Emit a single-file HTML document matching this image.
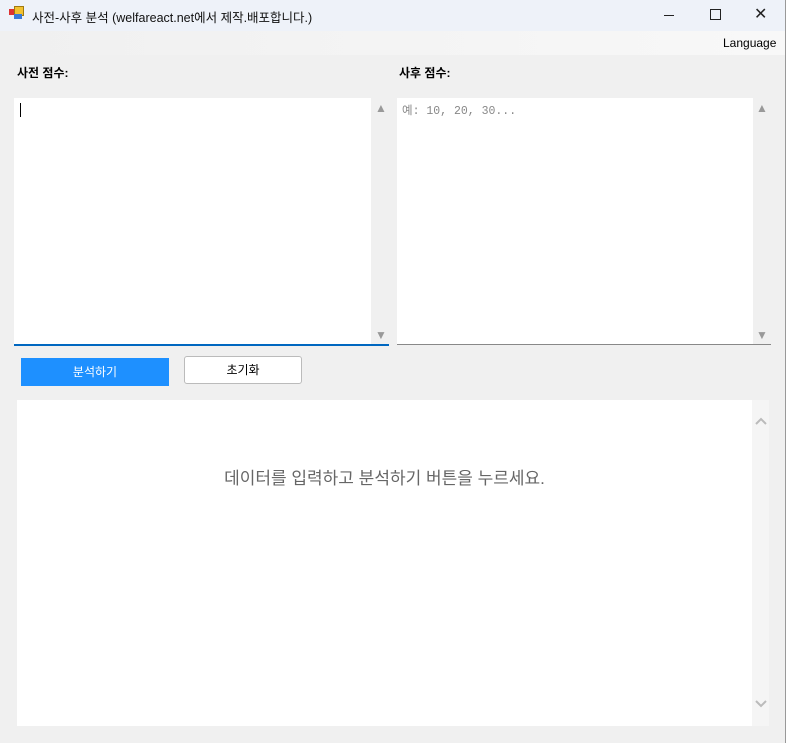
<!DOCTYPE html><html><head><style>
body{margin:0;width:786px;height:743px;overflow:hidden;font-family:"Liberation Sans","Noto Sans CJK KR",sans-serif;background:#f0f0f0;position:relative}
.a{position:absolute}
</style></head><body>
<div class="a" style="left:0;top:0;width:785px;height:31px;background:#eef2f9"></div>
<div class="a" style="left:9px;top:9px;width:7px;height:6px;background:#d33"></div>
<div class="a" style="left:14px;top:6px;width:8px;height:8px;background:#f2c230;border:1px solid #a07a10"></div>
<div class="a" style="left:14px;top:14px;width:8px;height:5px;background:#3a7ad8"></div>
<div class="a" style="left:32px;top:7px;font-size:12.5px;color:#111">사전-사후 분석 (welfareact.net에서 제작.배포합니다.)</div>
<div class="a" style="left:664px;top:15px;width:10px;height:1px;background:#222"></div>
<div class="a" style="left:710px;top:9px;width:9px;height:9px;border:1px solid #222"></div>
<div class="a" style="left:754px;top:4px;font-size:16px;color:#222">✕</div>
<div class="a" style="left:0;top:31px;width:785px;height:24px;background:linear-gradient(90deg,#f0f0f0,#f8f8f8)"></div>
<div class="a" style="left:723px;top:36px;font-size:12px;color:#000">Language</div>
<div class="a" style="left:785px;top:0;width:1px;height:743px;background:#999"></div>
<div class="a" style="left:17px;top:64px;font-size:12px;font-weight:bold">사전 점수:</div>
<div class="a" style="left:399px;top:64px;font-size:12px;font-weight:bold">사후 점수:</div>
<div class="a" style="left:14px;top:98px;width:375px;height:246px;background:#fff;border-bottom:2px solid #0067c0"></div>
<div class="a" style="left:371px;top:98px;width:18px;height:246px;background:#f0f0f0"></div>
<div class="a" style="left:375px;top:101px;font-size:12px;color:#999">▲</div>
<div class="a" style="left:375px;top:328px;font-size:12px;color:#999">▼</div>
<div class="a" style="left:20px;top:103px;width:1px;height:14px;background:#000"></div>
<div class="a" style="left:397px;top:98px;width:374px;height:246px;background:#fff;border-bottom:1px solid #888"></div>
<div class="a" style="left:753px;top:98px;width:18px;height:246px;background:#f0f0f0"></div>
<div class="a" style="left:756px;top:101px;font-size:12px;color:#999">▲</div>
<div class="a" style="left:756px;top:328px;font-size:12px;color:#999">▼</div>
<div class="a" style="left:402px;top:102px;font-size:11.5px;color:#888;font-family:'Liberation Mono','Noto Sans CJK KR',monospace">예: 10, 20, 30...</div>
<div class="a" style="left:21px;top:358px;width:148px;height:28px;background:#1e90ff;color:#fff;font-size:12px;text-align:center;line-height:28px">분석하기</div>
<div class="a" style="left:184px;top:356px;width:116px;height:26px;background:#fff;border:1px solid #bbb;border-radius:3px;font-size:12px;text-align:center;line-height:26px">초기화</div>
<div class="a" style="left:17px;top:400px;width:752px;height:326px;background:#fff"></div>
<div class="a" style="left:752px;top:400px;width:17px;height:326px;background:#f5f5f5"></div>
<svg class="a" style="left:754px;top:415px" width="14" height="300"><path d="M2 9 L7 4 L12 9" stroke="#bbb" stroke-width="2" fill="none"/><path d="M2 286 L7 291 L12 286" stroke="#bbb" stroke-width="2" fill="none"/></svg>
<div class="a" style="left:17px;top:464px;width:735px;text-align:center;font-size:17px;color:#666">데이터를 입력하고 분석하기 버튼을 누르세요.</div>
</body></html>
